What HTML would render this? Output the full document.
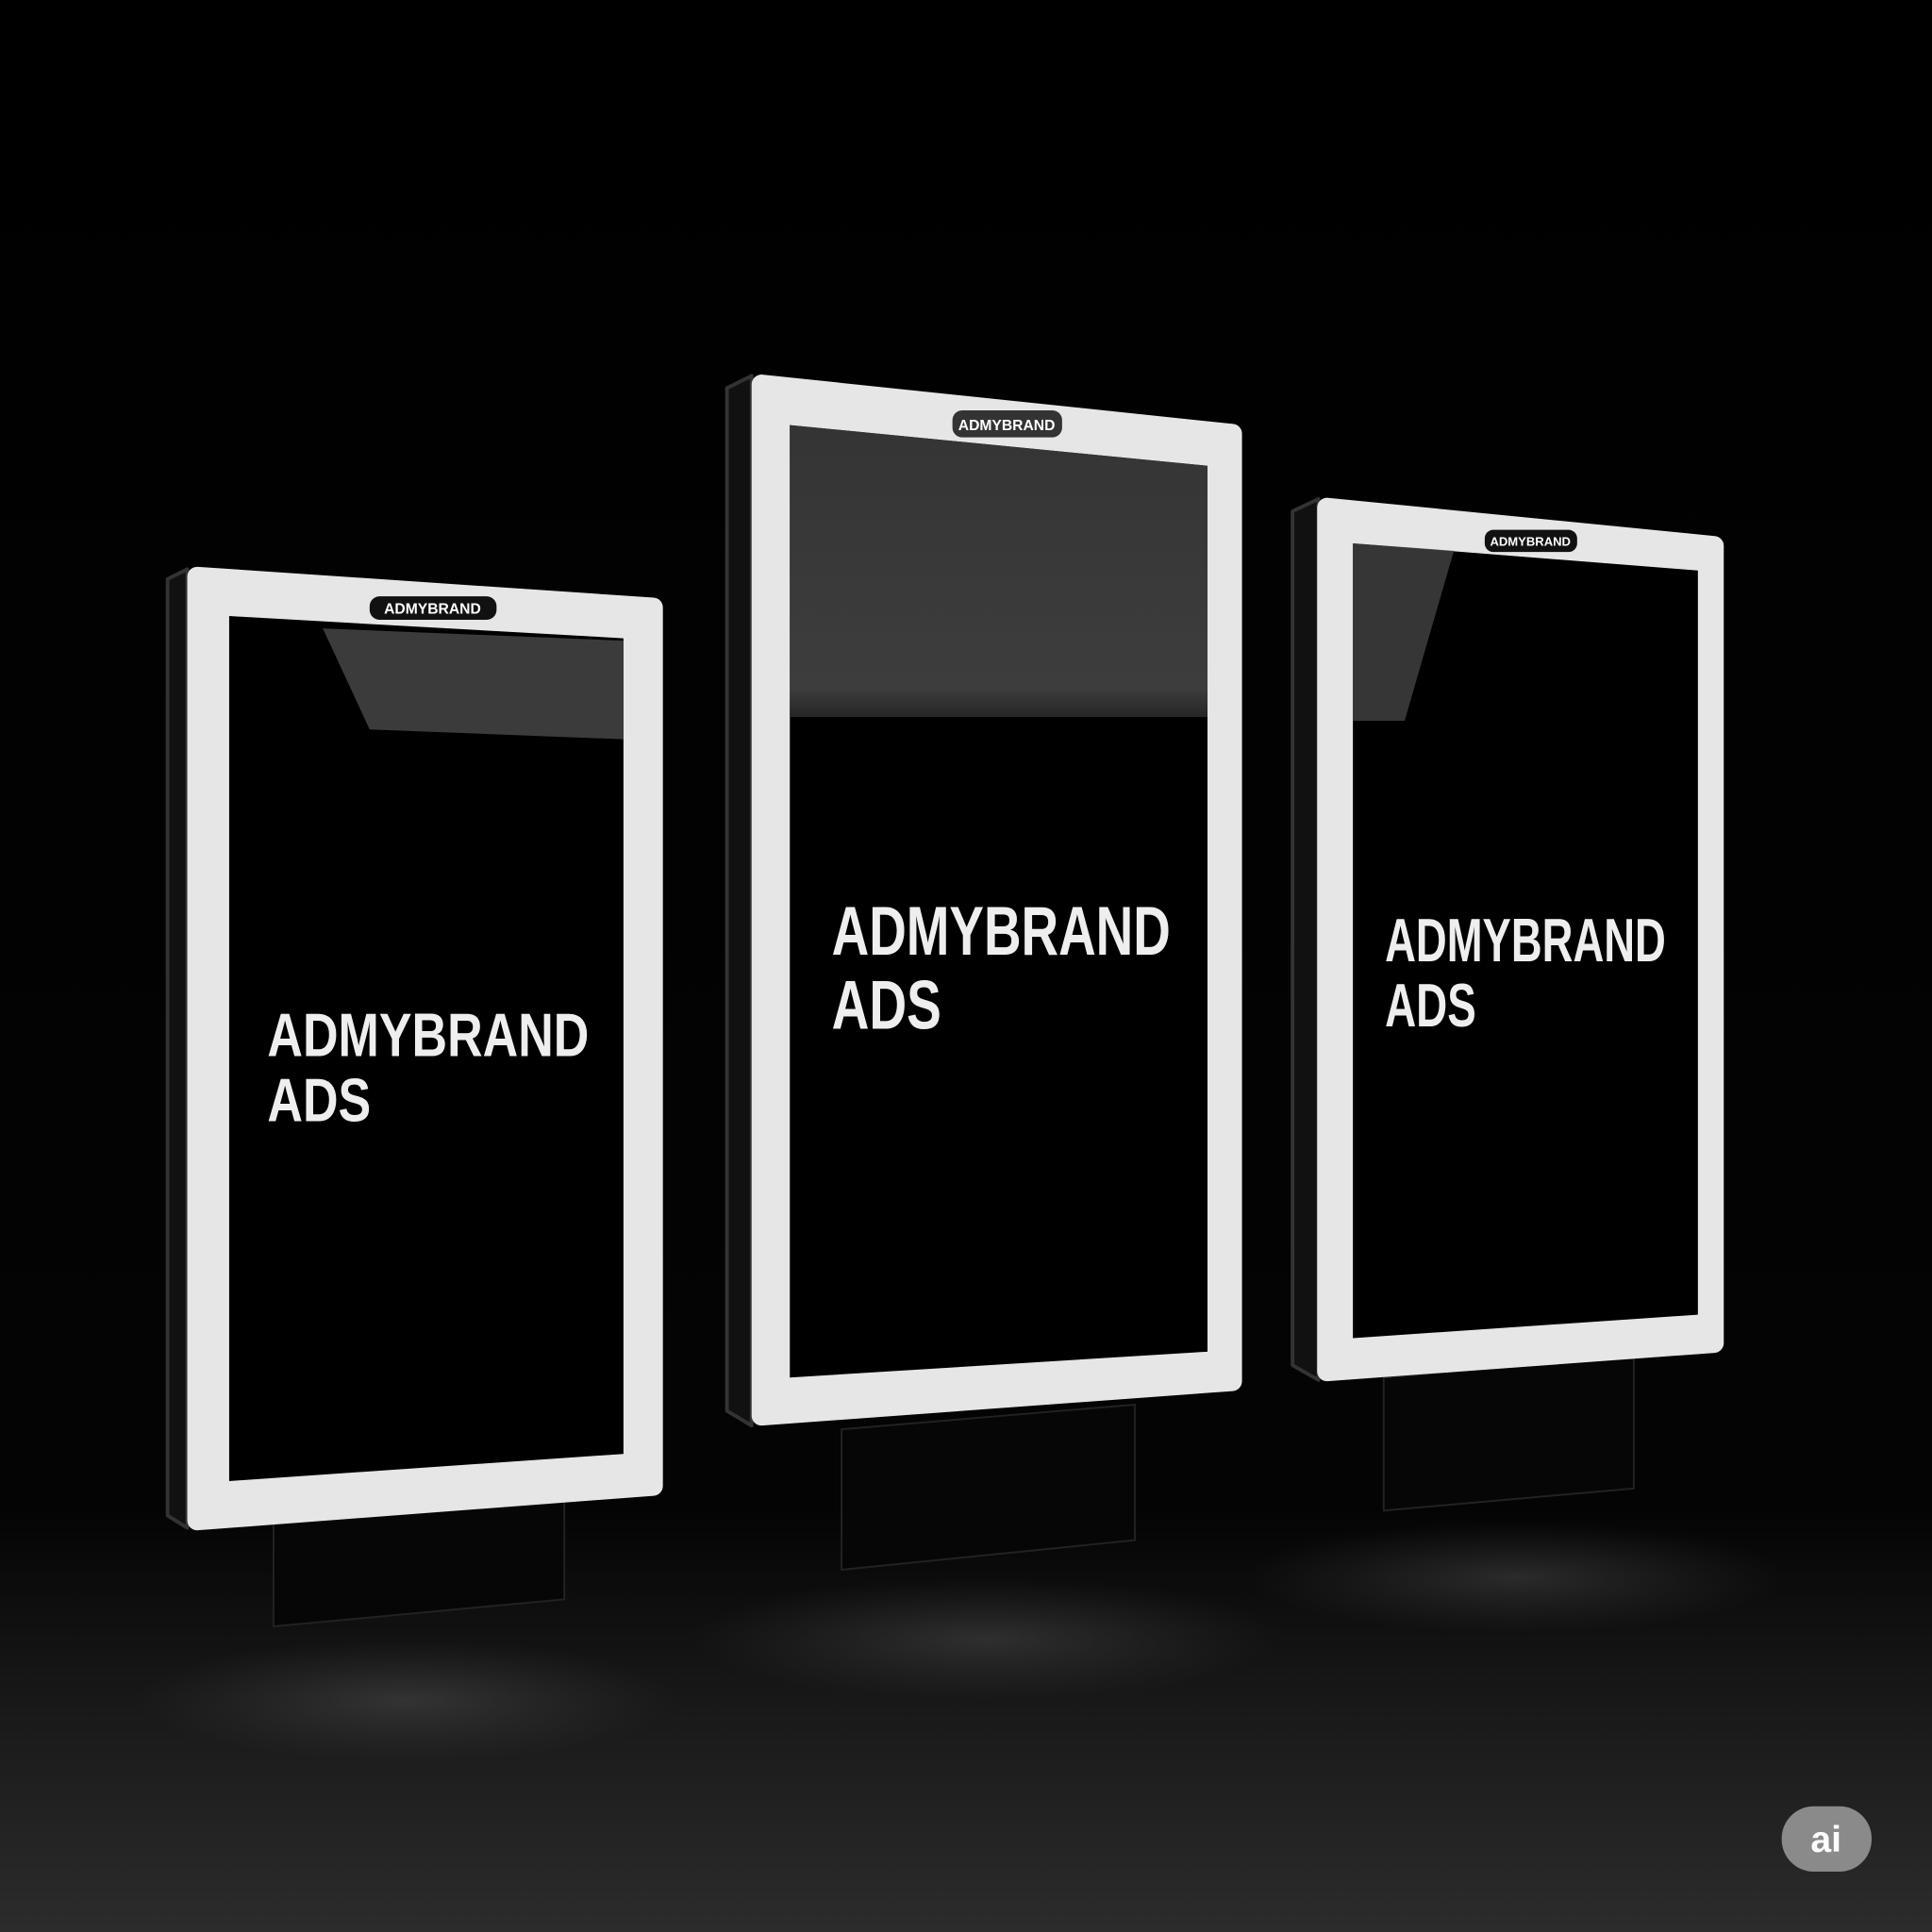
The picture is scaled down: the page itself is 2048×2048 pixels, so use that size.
<!DOCTYPE html>
<html><head><meta charset="utf-8"><style>
html,body{margin:0;padding:0;background:#000;}
svg{display:block;width:2048px;height:2048px;}
text{font-family:"Liberation Sans",sans-serif;font-weight:bold;}
</style></head><body>
<svg viewBox="0 0 1568 1568" xmlns="http://www.w3.org/2000/svg">
<defs>
<linearGradient id="bg" x1="0" y1="0" x2="0" y2="1">
<stop offset="0" stop-color="#000"/><stop offset="0.78" stop-color="#040404"/><stop offset="0.88" stop-color="#181818"/><stop offset="1" stop-color="#2c2c2c"/>
</linearGradient>
<radialGradient id="glow" cx="0.5" cy="0.5" r="0.5">
<stop offset="0" stop-color="#666" stop-opacity="0.35"/><stop offset="1" stop-color="#555" stop-opacity="0"/>
</radialGradient>
<linearGradient id="refl" x1="0" y1="0" x2="0" y2="1">
<stop offset="0" stop-color="#3a3a3a"/><stop offset="0.9" stop-color="#444"/><stop offset="1" stop-color="#2a2a2a"/>
</linearGradient>
</defs>
<rect width="1568" height="1568" fill="url(#bg)"/>
<ellipse cx="330" cy="1380" rx="220" ry="50" fill="url(#glow)"/>
<ellipse cx="800" cy="1330" rx="240" ry="50" fill="url(#glow)"/>
<ellipse cx="1230" cy="1280" rx="220" ry="45" fill="url(#glow)"/>

<!-- LEFT -->
<polygon points="222,1232 458,1212 458,1298 222,1320" fill="#060606" stroke="#222" stroke-width="1.5"/>
<polygon points="136,470 152,462 152,1240 136,1230" fill="#111" stroke="#333" stroke-width="3" stroke-linejoin="round"/>
<polygon points="160,468 530,493 530,1206 160,1234" fill="#e6e6e6" stroke="#e6e6e6" stroke-width="16" stroke-linejoin="round"/>
<polygon points="186,500 506,518 506,1180 186,1202" fill="#000"/>
<polygon points="262,510 506,520 506,600 300,592" fill="#4a4a4a" opacity="0.8"/>
<rect x="300" y="484" width="103" height="19" rx="8" fill="#111"/>
<text x="351" y="498" font-size="12" fill="#fff" text-anchor="middle">ADMYBRAND</text>
<text x="217" y="857" font-size="50" fill="#eee" textLength="261" lengthAdjust="spacingAndGlyphs">ADMYBRAND</text>
<text x="217" y="910" font-size="50" fill="#eee" textLength="84" lengthAdjust="spacingAndGlyphs">ADS</text>

<!-- MIDDLE -->
<polygon points="683,1160 921,1140 921,1250 683,1274" fill="#060606" stroke="#222" stroke-width="1.5"/>
<polygon points="590,315 610,305 610,1157 590,1145" fill="#111" stroke="#333" stroke-width="3" stroke-linejoin="round"/>
<polygon points="618,312 1000,352 1000,1121 618,1149" fill="#e6e6e6" stroke="#e6e6e6" stroke-width="16" stroke-linejoin="round"/>
<polygon points="641,345 980,378 980,1097 641,1118" fill="#000"/>
<polygon points="641,345 980,378 980,582 641,582" fill="url(#refl)" opacity="0.9"/>
<rect x="773" y="333" width="89" height="22" rx="8" fill="#333"/>
<text x="817" y="349" font-size="12" fill="#fff" text-anchor="middle">ADMYBRAND</text>
<text x="675" y="775" font-size="56" fill="#eee" textLength="275" lengthAdjust="spacingAndGlyphs">ADMYBRAND</text>
<text x="675" y="835" font-size="56" fill="#eee" textLength="89" lengthAdjust="spacingAndGlyphs">ADS</text>

<!-- RIGHT -->
<polygon points="1123,1118 1326,1100 1326,1208 1123,1226" fill="#060606" stroke="#222" stroke-width="1.5"/>
<polygon points="1049,415 1070,405 1070,1120 1049,1108" fill="#111" stroke="#333" stroke-width="3" stroke-linejoin="round"/>
<polygon points="1077,412 1391,443 1391,1090 1077,1113" fill="#e6e6e6" stroke="#e6e6e6" stroke-width="16" stroke-linejoin="round"/>
<polygon points="1098,441 1378,463 1378,1067 1098,1086" fill="#000"/>
<polygon points="1098,441 1180,447 1140,585 1098,585" fill="#444" opacity="0.8"/>
<rect x="1205" y="430" width="75" height="18" rx="7" fill="#111"/>
<text x="1242" y="443" font-size="10" fill="#fff" text-anchor="middle">ADMYBRAND</text>
<text x="1124" y="780" font-size="50" fill="#eee" textLength="228" lengthAdjust="spacingAndGlyphs">ADMYBRAND</text>
<text x="1124" y="833" font-size="50" fill="#eee" textLength="74" lengthAdjust="spacingAndGlyphs">ADS</text>

<!-- ai badge -->
<rect x="1446" y="1466" width="73" height="53" rx="26" fill="#8a8a8a"/>
<text x="1482" y="1503" font-size="30" fill="#fff" text-anchor="middle">ai</text>
</svg>
</body></html>
